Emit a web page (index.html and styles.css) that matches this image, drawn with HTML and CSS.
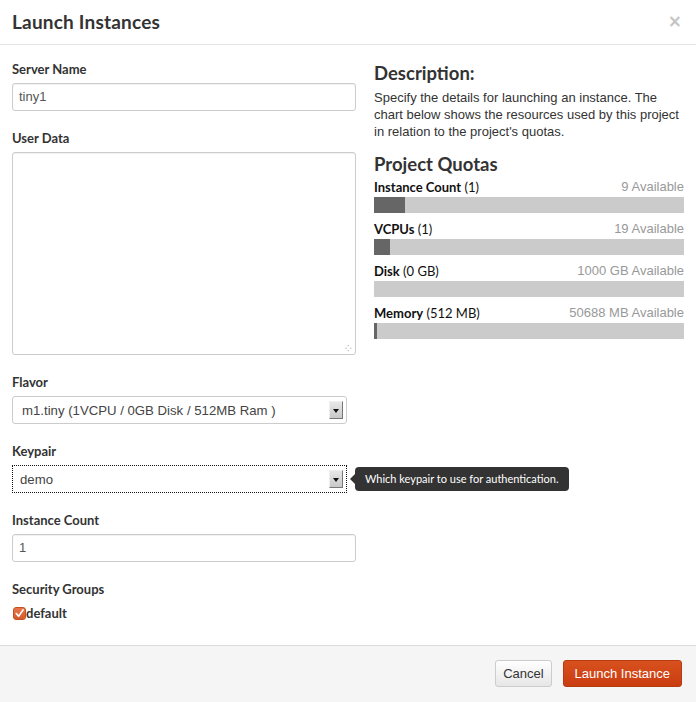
FILE: index.html
```html
<!DOCTYPE html>
<html>
<head>
<meta charset="utf-8">
<link rel="stylesheet" href="styles.css">
</head>
<body>
<div class="modal">
  <div class="modal-header">
    <h3 class="title">Launch Instances</h3>
    <span class="close">×</span>
  </div>
  <div class="modal-body">
    <div class="left">
      <div class="field">
        <div class="label">Server Name</div>
        <div class="input">tiny1</div>
      </div>
      <div class="field">
        <div class="label">User Data</div>
        <div class="textarea"><span class="grip">⁘</span></div>
      </div>
      <div class="field">
        <div class="label">Flavor</div>
        <div class="select"><span class="sel-text">m1.tiny (1VCPU / 0GB Disk / 512MB Ram )</span><span class="arrow"><span class="tri"></span></span></div>
      </div>
      <div class="field">
        <div class="label">Keypair</div>
        <div class="select-row">
          <div class="select focus"><span class="sel-text">demo</span><span class="arrow"><span class="tri"></span></span></div>
          <div class="tooltip">Which keypair to use for authentication.</div>
        </div>
      </div>
      <div class="field">
        <div class="label">Instance Count</div>
        <div class="input">1</div>
      </div>
      <div class="field">
        <div class="label">Security Groups</div>
        <div class="check-row">
          <span class="checkbox"><svg width="12" height="13" viewBox="0 0 12 13"><path d="M2.5 6.5 L5 9.5 L10 2.5" fill="none" stroke="#fff" stroke-width="1.8" stroke-linecap="round" stroke-linejoin="round"/></svg></span><span class="check-label">default</span>
        </div>
      </div>
    </div>
    <div class="right">
      <h3 class="heading">Description:</h3>
      <p class="desc">Specify the details for launching an instance. The chart below shows the resources used by this project in relation to the project's quotas.</p>
      <h3 class="heading quotas-h">Project Quotas</h3>
      <div class="quota">
        <div class="q-head"><span><b>Instance Count</b> (1)</span><span class="avail">9 Available</span></div>
        <div class="bar"><div class="fill" style="width:10%"></div></div>
      </div>
      <div class="quota">
        <div class="q-head"><span><b>VCPUs</b> (1)</span><span class="avail">19 Available</span></div>
        <div class="bar"><div class="fill" style="width:5%"></div></div>
      </div>
      <div class="quota">
        <div class="q-head"><span><b>Disk</b> (0 GB)</span><span class="avail">1000 GB Available</span></div>
        <div class="bar"><div class="fill" style="width:0%"></div></div>
      </div>
      <div class="quota">
        <div class="q-head"><span><b>Memory</b> (512 MB)</span><span class="avail">50688 MB Available</span></div>
        <div class="bar"><div class="fill" style="width:1%"></div></div>
      </div>
    </div>
  </div>
  <div class="modal-footer">
    <button class="btn">Cancel</button>
    <button class="btn btn-primary">Launch Instance</button>
  </div>
</div>
</body>
</html>
```
FILE: styles.css
```css
* { box-sizing: border-box; }
html, body { margin: 0; padding: 0; background: #fff; }
body { width: 696px; height: 702px; overflow: hidden; font-family: "Liberation Sans", Arial, sans-serif; font-size: 13px; color: #333; }
.modal { width: 696px; height: 702px; display: flex; flex-direction: column; }
.modal-header { height: 45px; border-bottom: 1px solid #e5e5e5; display: flex; align-items: center; justify-content: space-between; padding: 0 14px 2px 12px; }
.title { margin: 0; font-family: Lato, "Noto Sans", sans-serif; font-weight: 700; font-size: 19px; color: #333; letter-spacing: 0.2px; }
.close { color: #c4c4c4; font-family: "DejaVu Sans", sans-serif; font-weight: bold; font-size: 17px; line-height: 1; }
.modal-body { height: 600px; padding: 15px 12px 0 12px; display: grid; grid-template-columns: 344px 310px; column-gap: 18px; align-items: start; }
.field { margin-bottom: 18px; }
.label { font-family: Lato, "Noto Sans", sans-serif; font-weight: 700; font-size: 13px; line-height: 18px; height: 18px; margin-bottom: 5px; color: #333; }
.input { height: 28px; border: 1px solid #ccc; border-radius: 3px; padding: 0 6px; line-height: 26px; font-size: 13px; color: #555; box-shadow: inset 0 1px 1px rgba(0,0,0,0.06); }
.textarea { position: relative; height: 203px; border: 1px solid #ccc; border-radius: 3px; box-shadow: inset 0 1px 1px rgba(0,0,0,0.06); }
.grip { position: absolute; right: 3px; bottom: 1px; font-size: 8px; color: #777; line-height: 1; }
.select { flex-shrink: 0; width: 335px; height: 28px; border: 1px solid #ccc; border-radius: 3px; display: flex; align-items: center; justify-content: space-between; padding: 0 3px 0 9px; font-size: 13.2px; color: #444; }
.select.focus { border: 1px dotted #111; border-radius: 0; padding-left: 7px; }
.sel-text { white-space: nowrap; }
.arrow { width: 14px; height: 18px; background: linear-gradient(#e8e8e8, #c8c8c8); border: 1px solid #999; border-color: #eee #777 #777 #eee; display: flex; align-items: center; justify-content: center; }
.tri { width: 0; height: 0; border-left: 3.5px solid transparent; border-right: 3.5px solid transparent; border-top: 4px solid #111; margin-top: 1px; }
.select-row { display: flex; align-items: center; }
.tooltip { position: relative; margin-left: 8px; background: #333; color: #fff; font-family: Lato, "Noto Sans", sans-serif; font-size: 11px; line-height: 24px; height: 24px; padding: 0 10px; border-radius: 4px; white-space: nowrap; }
.tooltip::before { content: ""; position: absolute; left: -5px; top: 7px; border-top: 5px solid transparent; border-bottom: 5px solid transparent; border-right: 5px solid #333; }
.check-row { display: flex; align-items: center; height: 20px; }
.checkbox { width: 13px; height: 13px; border-radius: 3px; background: linear-gradient(#e8754a, #d85a2a); border: 1px solid #c25020; display: inline-flex; align-items: center; justify-content: center; margin-left: 1px; }
.checkbox svg { display: block; }
.check-label { font-family: Lato, "Noto Sans", sans-serif; font-weight: 700; font-size: 13px; color: #333; }
.heading { margin: 0; font-family: Lato, "Noto Sans", sans-serif; font-weight: 700; font-size: 18.5px; line-height: 24px; color: #333; }
.right { padding-top: 1px; }
.desc { margin: 4px 0 12px 0; font-size: 13px; line-height: 17px; color: #333; }
.quotas-h { margin-bottom: 2px; }
.quota { margin-bottom: 7px; }
.q-head { display: flex; justify-content: space-between; line-height: 18px; height: 18px; margin-bottom: 1px; font-family: Lato, "Noto Sans", sans-serif; font-size: 13px; color: #111; }
.q-head b { font-weight: 700; }
.avail { font-family: "Liberation Sans", Arial, sans-serif; color: #999; }
.bar { height: 16px; background: #cbcbcb; }
.fill { height: 100%; background: #666; }
.modal-footer { flex: 1; border-top: 1px solid #ddd; background: #f5f5f5; display: flex; justify-content: flex-end; align-items: flex-start; padding: 14px 14px 0 0; gap: 11px; }
.btn { height: 27px; padding: 0 7px; border: 1px solid #ccc; border-radius: 3px; background: linear-gradient(#fff, #e6e6e6); font-family: "Liberation Sans", Arial, sans-serif; font-size: 13px; color: #333; }
.btn-primary { background: linear-gradient(#d9511f, #c93c10); border-color: #b83a0f; color: #fff; padding: 0 11px; }
```
